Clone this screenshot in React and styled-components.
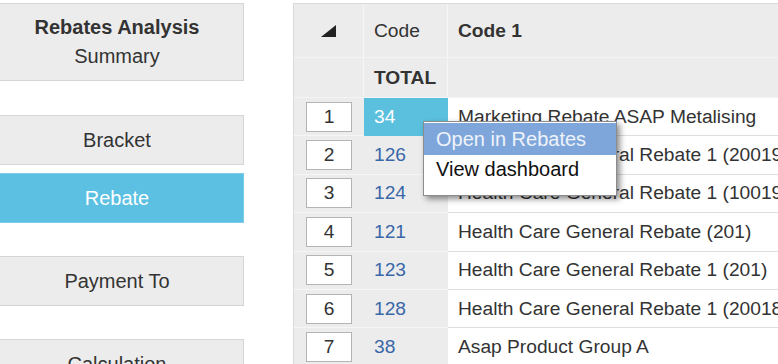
import React from 'react'
import styled, { createGlobalStyle } from 'styled-components'

const GlobalStyle = createGlobalStyle`
body {
  margin: 0;
  font-family: "Liberation Sans", Arial, sans-serif;
  background: #fff;
  overflow: hidden;
}
`

const Page = styled.div`
display: flex;
align-items: flex-start;
padding-top: 3px;
height: 364px;
box-sizing: border-box;
overflow: hidden;
`

const Sidebar = styled.div`
width: 254px;
margin-left: -10px;
flex-shrink: 0;
display: flex;
flex-direction: column;
`

const NavButton = styled.div`
box-sizing: border-box;
height: ${({ $height }) => $height || 50}px;
margin-top: ${({ $gap }) => $gap || 0}px;
display: flex;
flex-direction: column;
align-items: center;
justify-content: center;
background: ${({ $active }) => ($active ? '#5bc0e2' : '#ececec')};
color: ${({ $active }) => ($active ? '#fff' : '#333')};
border: 1px solid ${({ $active }) => ($active ? '#7ccbe7' : '#d5d5d5')};
font-size: 20px;
line-height: 29px;
cursor: pointer;
`

const NavTitle = styled.span`
font-weight: bold;
`

const TableWrap = styled.div`
position: relative;
flex: 1;
margin-left: 49px;
border-top: 1px solid #dadada;
border-left: 1px solid #dadada;
overflow: hidden;
color: #333;
font-size: 19.2px;
`

const Row = styled.div`
display: grid;
grid-template-columns: 70px 84px 1fr;
height: ${({ $height }) => $height}px;
`

const HeadCell = styled.div`
display: flex;
align-items: center;
justify-content: ${({ $center }) => ($center ? 'center' : 'flex-start')};
padding-left: ${({ $center }) => ($center ? 0 : 10)}px;
background: #ececec;
border-right: ${({ $last }) => ($last ? 'none' : '1px solid #f6f6f6')};
border-bottom: 1px solid #f4f4f4;
font-weight: ${({ $bold }) => ($bold ? 'bold' : 'normal')};
white-space: nowrap;
`

const IndexCell = styled.div`
display: flex;
align-items: center;
justify-content: center;
background: #ececec;
border-bottom: 1px solid #f6f6f6;
`

const IndexBox = styled.div`
box-sizing: border-box;
width: 46px;
height: 30px;
background: #fff;
border: 1px solid #b4b4b4;
display: flex;
align-items: center;
justify-content: center;
color: #333;
`

const CodeCell = styled.div`
display: flex;
align-items: center;
padding-left: 10px;
background: ${({ $selected }) => ($selected ? '#5bc0de' : '#ececec')};
color: ${({ $selected }) => ($selected ? '#fff' : '#3a67a8')};
border-bottom: 1px solid ${({ $selected }) => ($selected ? '#5bc0de' : '#f6f6f6')};
`

const NameCell = styled.div`
display: flex;
align-items: center;
padding-left: 10px;
background: #fff;
border-bottom: 1px solid #dedede;
white-space: nowrap;
overflow: hidden;
`

const ContextMenu = styled.div`
position: absolute;
left: 129px;
top: 117px;
width: 194px;
box-sizing: border-box;
padding: 1px 0 12px;
background: #fff;
border: 1px solid #8c8c8c;
box-shadow: 3px 3px 6px rgba(0, 0, 0, 0.45);
font-size: 20px;
`

const MenuItem = styled.div`
height: ${({ $height }) => $height}px;
display: flex;
align-items: center;
padding-left: 12px;
background: ${({ $hover }) => ($hover ? '#7fa6da' : 'transparent')};
color: ${({ $hover }) => ($hover ? '#eef3fa' : '#111')};
white-space: nowrap;
`

const rows = [
  { n: 1, code: '34', name: 'Marketing Rebate ASAP Metalising' },
  { n: 2, code: '126', name: 'Health Care General Rebate 1 (20019' },
  { n: 3, code: '124', name: 'Health Care General Rebate 1 (10019' },
  { n: 4, code: '121', name: 'Health Care General Rebate (201)' },
  { n: 5, code: '123', name: 'Health Care General Rebate 1 (201)' },
  { n: 6, code: '128', name: 'Health Care General Rebate 1 (20018' },
  { n: 7, code: '38', name: 'Asap Product Group A' },
]

const App = () => {
  return (
    <>
      <GlobalStyle />
      <Page>
        <Sidebar>
          <NavButton $height={78}>
            <NavTitle>Rebates Analysis</NavTitle>
            <span>Summary</span>
          </NavButton>
          <NavButton $gap={34}>Bracket</NavButton>
          <NavButton $gap={8} $active>Rebate</NavButton>
          <NavButton $gap={33}>Payment To</NavButton>
          <NavButton $gap={33}>Calculation</NavButton>
        </Sidebar>

        <TableWrap>
          <Row $height={54}>
            <HeadCell $center>
              <svg width="15" height="12" viewBox="0 0 15 12">
                <polygon points="15,0 15,12 0,12" fill="#222" />
              </svg>
            </HeadCell>
            <HeadCell>Code</HeadCell>
            <HeadCell $last $bold>Code 1</HeadCell>
          </Row>
          <Row $height={40}>
            <HeadCell />
            <HeadCell $bold>TOTAL</HeadCell>
            <HeadCell $last />
          </Row>
          {rows.map((r) => (
            <Row key={r.n} $height={38.4}>
              <IndexCell>
                <IndexBox>{r.n}</IndexBox>
              </IndexCell>
              <CodeCell $selected={r.n === 1}>{r.code}</CodeCell>
              <NameCell>{r.name}</NameCell>
            </Row>
          ))}

          <ContextMenu>
            <MenuItem $height={32} $hover>Open in Rebates</MenuItem>
            <MenuItem $height={28}>View dashboard</MenuItem>
          </ContextMenu>
        </TableWrap>
      </Page>
    </>
  )
}

export default App
